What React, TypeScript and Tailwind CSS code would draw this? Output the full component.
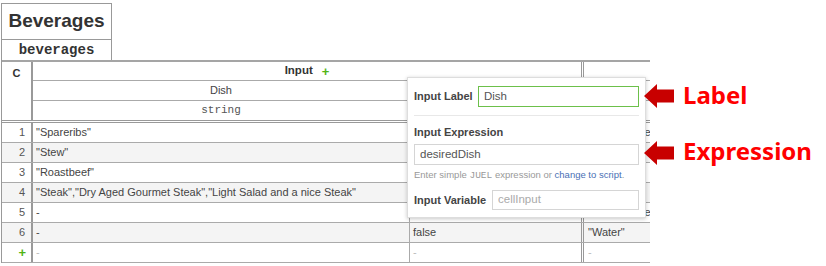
import React from "react";

const rows = [
  { n: "1", dish: '"Spareribs"', guests: "", bev: '"Aecht Schlenkerla Rauchbier"' },
  { n: "2", dish: '"Stew"', guests: "", bev: "" },
  { n: "3", dish: '"Roastbeef"', guests: "", bev: "" },
  { n: "4", dish: '"Steak","Dry Aged Gourmet Steak","Light Salad and a nice Steak"', guests: "", bev: "" },
  { n: "5", dish: "-", guests: "", bev: '"Aecht Schlenkerla"' },
  { n: "6", dish: "-", guests: "false", bev: '"Water"' },
];

function Arrow({ top }: { top: number }) {
  return (
    <svg
      className="absolute left-[643px]"
      style={{ top }}
      width="32"
      height="26"
      viewBox="0 0 32 26"
    >
      <polygon points="1,13 14,1 14,6.5 31,6.5 31,19.5 14,19.5 14,25" fill="#c80000" />
    </svg>
  );
}

export default function App() {
  return (
    <div className="relative w-[826px] h-[266px] bg-white overflow-hidden font-['Liberation_Sans',Arial,sans-serif] text-[#444]">
      <div className="pt-[3px] pl-[1px]">
        {/* Title box */}
        <div className="w-[111px] border-x border-t border-[#999]">
          <div className="h-[35px] flex items-center justify-center text-[19px] font-bold text-[#333]">
            Beverages
          </div>
          <div className="h-[21px] border-t border-[#999] flex items-center justify-center font-['Liberation_Mono',monospace] font-bold text-[14px] text-[#333]">
            beverages
          </div>
        </div>

        {/* Table */}
        <div className="w-[649px] overflow-hidden border-l border-[#999]">
          <div className="w-[820px] border-t-2 border-[#a5a5a5]">
            {/* Header */}
            <div className="flex border-b-[3px] border-double border-[#999]">
              <div className="w-[31px] shrink-0 border-r-2 border-[#999] flex justify-center pt-[4px] text-[11px] font-bold text-[#333] leading-[14px]">
                C
              </div>
              <div className="flex flex-col">
                <div className="flex h-[19px] border-b border-[#aaa]">
                  <div className="w-[551px] shrink-0 border-r-[3px] border-double border-[#999] flex items-center justify-center gap-[9px] text-[11.5px]">
                    <span className="font-bold text-[#333]">Input</span>
                    <span className="text-[#52b415] font-bold text-[13px] leading-none">+</span>
                  </div>
                  <div className="w-[217px] shrink-0" />
                </div>
                <div className="flex h-[20px] border-b border-[#aaa] text-[11px]">
                  <div className="w-[377px] shrink-0 border-r border-[#aaa] flex items-center justify-center">Dish</div>
                  <div className="w-[174px] shrink-0 border-r-[3px] border-double border-[#999]" />
                  <div className="w-[217px] shrink-0" />
                </div>
                <div className="flex h-[19px] font-['Liberation_Mono',monospace] text-[11px] text-[#555]">
                  <div className="w-[377px] shrink-0 border-r border-[#aaa] flex items-center justify-center">string</div>
                  <div className="w-[174px] shrink-0 border-r-[3px] border-double border-[#999]" />
                  <div className="w-[217px] shrink-0" />
                </div>
              </div>
            </div>

            {/* Rows */}
            {rows.map((r, i) => (
              <div
                key={r.n}
                className={`flex h-[20px] border-b border-[#aaa] text-[11px] ${i % 2 === 1 ? "bg-[#f4f4f4]" : "bg-white"}`}
              >
                <div className="w-[31px] shrink-0 border-r-2 border-[#999] flex items-center justify-end pr-[6px] text-[#555]">
                  {r.n}
                </div>
                <div className="w-[377px] shrink-0 border-r border-[#aaa] flex items-center pl-[3px] whitespace-nowrap overflow-hidden">
                  {r.dish}
                </div>
                <div className="w-[174px] shrink-0 border-r-[3px] border-double border-[#999] flex items-center pl-[3px] whitespace-nowrap">
                  {r.guests}
                </div>
                <div className="w-[217px] shrink-0 flex items-center pl-[4px] whitespace-nowrap">{r.bev}</div>
              </div>
            ))}
            <div className="flex h-[20px] border-b border-[#aaa] text-[11px] bg-white text-[#bbb]">
              <div className="w-[31px] shrink-0 border-r-2 border-[#999] flex items-center justify-end pr-[5px] text-[#52b415] font-bold text-[13px]">
                +
              </div>
              <div className="w-[377px] shrink-0 border-r border-[#aaa] flex items-center pl-[3px]">-</div>
              <div className="w-[174px] shrink-0 border-r-[3px] border-double border-[#999] flex items-center pl-[3px]">-</div>
              <div className="w-[217px] shrink-0 flex items-center pl-[4px]">-</div>
            </div>
          </div>
        </div>
      </div>

      {/* Popup */}
      <div className="absolute left-[407px] top-[77px] w-[239px] h-[141px] bg-white border border-[#ddd] shadow-[0_1px_4px_rgba(0,0,0,0.22)] px-[6px]">
        <div className="flex items-center pt-[8px]">
          <div className="w-[64px] shrink-0 text-[11px] font-bold text-[#444]">Input Label</div>
          <div className="flex-1 h-[21px] border border-[#6cc04a] flex items-center px-[5px] text-[11.5px] text-[#555]">
            Dish
          </div>
        </div>
        <div className="mt-[8px] border-t border-[#e8e8e8]" />
        <div className="mt-[9px] leading-[14px] text-[11px] font-bold text-[#444]">Input Expression</div>
        <div className="mt-[5px] h-[21px] border border-[#d5d5d5] flex items-center px-[5px] text-[11.5px] text-[#555]">
          desiredDish
        </div>
        <div className="mt-[4px] leading-[12px] text-[9.5px] text-[#999] whitespace-nowrap">
          Enter simple <span className="font-['Liberation_Mono',monospace]">JUEL</span> expression or{" "}
          <span className="text-[#4a70b5]">change to script</span>.
        </div>
        <div className="flex items-center mt-[8px]">
          <div className="w-[78px] shrink-0 text-[11px] font-bold text-[#444]">Input Variable</div>
          <div className="flex-1 h-[20px] border border-[#d5d5d5] flex items-center px-[5px] text-[11.5px] text-[#aaa]">
            cellInput
          </div>
        </div>
      </div>

      {/* Annotations */}
      <Arrow top={83} />
      <Arrow top={140} />
      <div className="absolute left-[683px] top-[83px] leading-[24px] text-[24px] font-bold text-[#ff0000] font-['Noto_Sans',sans-serif] whitespace-nowrap">
        Label
      </div>
      <div className="absolute left-[683px] top-[139px] leading-[24px] text-[24px] font-bold text-[#ff0000] font-['Noto_Sans',sans-serif] whitespace-nowrap">
        Expression
      </div>
    </div>
  );
}
